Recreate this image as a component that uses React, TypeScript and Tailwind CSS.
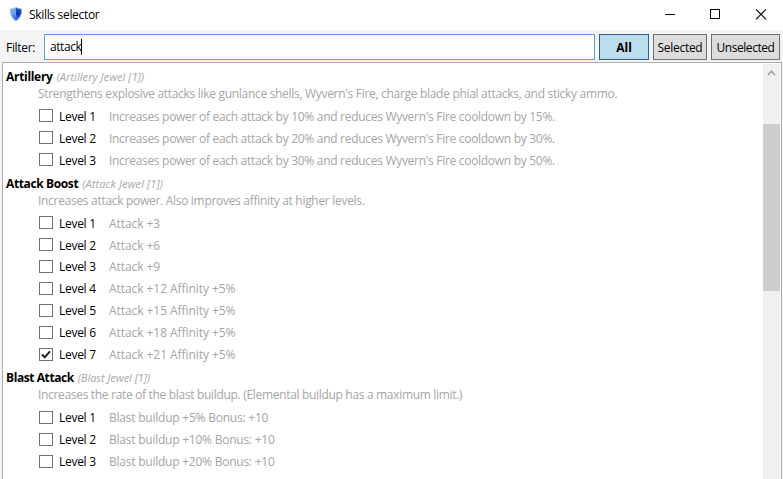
type Level = { text: string; track: string; line: string; checked?: boolean };
type Skill = {
  name: string;
  nameTrack: string;
  jewel: string;
  jewelTrack: string;
  description: string;
  descTrack: string;
  header: string;
  levels: Level[];
};

const skills: Skill[] = [
  {
    name: 'Artillery',
    nameTrack: 'tracking-[-0.3px]',
    jewel: '(Artillery Jewel [1])',
    jewelTrack: 'tracking-[0.06px]',
    description:
      "Strengthens explosive attacks like gunlance shells, Wyvern's Fire, charge blade phial attacks, and sticky ammo.",
    descTrack: 'tracking-[-0.305px]',
    header: 'pt-[4px] pb-[1px]',
    levels: [
      { text: "Increases power of each attack by 10% and reduces Wyvern's Fire cooldown by 15%.", track: 'tracking-[-0.295px]', line: 'leading-[24px]' },
      { text: "Increases power of each attack by 20% and reduces Wyvern's Fire cooldown by 30%.", track: 'tracking-[-0.295px]', line: 'leading-[24px]' },
      { text: "Increases power of each attack by 30% and reduces Wyvern's Fire cooldown by 50%.", track: 'tracking-[-0.295px]', line: 'leading-[24px]' },
    ],
  },
  {
    name: 'Attack Boost',
    nameTrack: 'tracking-[-0.38px]',
    jewel: '(Attack Jewel [1])',
    jewelTrack: 'tracking-[0.1px]',
    description: 'Increases attack power. Also improves affinity at higher levels.',
    descTrack: 'tracking-[-0.3px]',
    header: 'pt-[4px] pb-[1px]',
    levels: [
      { text: 'Attack +3', track: 'tracking-[-0.06px]', line: 'leading-[24px]' },
      { text: 'Attack +6', track: 'tracking-[-0.06px]', line: 'leading-[24px]' },
      { text: 'Attack +9', track: 'tracking-[-0.06px]', line: 'leading-[22px]' },
      { text: 'Attack +12 Affinity +5%', track: 'tracking-[-0.06px]', line: 'leading-[22px]' },
      { text: 'Attack +15 Affinity +5%', track: 'tracking-[-0.06px]', line: 'leading-[22px]' },
      { text: 'Attack +18 Affinity +5%', track: 'tracking-[-0.06px]', line: 'leading-[22px]' },
      { text: 'Attack +21 Affinity +5%', track: 'tracking-[-0.06px]', line: 'leading-[22px]', checked: true },
    ],
  },
  {
    name: 'Blast Attack',
    nameTrack: 'tracking-[-0.42px]',
    jewel: '(Blast Jewel [1])',
    jewelTrack: 'tracking-[-0.04px]',
    description: 'Increases the rate of the blast buildup. (Elemental buildup has a maximum limit.)',
    descTrack: 'tracking-[-0.32px]',
    header: 'pt-[3px] pb-[2px]',
    levels: [
      { text: 'Blast buildup +5% Bonus: +10', track: 'tracking-[-0.225px]', line: 'leading-[22px]' },
      { text: 'Blast buildup +10% Bonus: +10', track: 'tracking-[-0.235px]', line: 'leading-[22px]' },
      { text: 'Blast buildup +20% Bonus: +10', track: 'tracking-[-0.235px]', line: 'leading-[22px]' },
    ],
  },
];

function Shield() {
  return (
    <svg width="14" height="16" viewBox="0 0 14 16" className="mb-[2px] ml-[9px]">
      <defs>
        <linearGradient id="shieldLeft" x1="0" y1="0" x2="0" y2="1">
          <stop offset="0" stopColor="#7fa9e4" />
          <stop offset="0.45" stopColor="#6aa0f0" />
          <stop offset="1" stopColor="#1f5fe0" />
        </linearGradient>
        <linearGradient id="shieldRight" x1="0" y1="0" x2="0" y2="1">
          <stop offset="0" stopColor="#2b5fc4" />
          <stop offset="0.45" stopColor="#0a36b8" />
          <stop offset="1" stopColor="#3f86f0" />
        </linearGradient>
      </defs>
      <path d="M7 1.300 Q9.500 2.900 12.700 3 Q13.200 11 7 15 Q0.800 11 1.300 3 Q4.500 2.900 7 1.300Z" fill="url(#shieldLeft)" />
      <path d="M7 1.300 Q9.500 2.900 12.700 3 Q13.200 11 7 15Z" fill="url(#shieldRight)" />
      <path d="M7 1.300 Q9.500 2.900 12.700 3 Q13.200 11 7 15 Q0.800 11 1.300 3 Q4.500 2.900 7 1.300Z" fill="none" stroke="#b4c4dc" strokeWidth="0.800" />
    </svg>
  );
}

function Checkbox({ checked }: { checked?: boolean }) {
  return (
    <span className="mt-1 h-[13px] w-[14px] shrink-0 border border-[#707070] bg-white">
      {checked && (
        <svg width="12" height="11" viewBox="0 0 12 11" className="block">
          <path d="M2 5.500 L4.700 8.300 L10 2.300" fill="none" stroke="#212121" strokeWidth="2" />
        </svg>
      )}
    </span>
  );
}

function SkillSection({ skill }: { skill: Skill }) {
  return (
    <section>
      <div className={skill.header}>
        <div className="flex h-[18px] items-baseline gap-1 pl-[3px] leading-[18px]">
          <h2 className={`font-bold ${skill.nameTrack}`}>{skill.name}</h2>
          <em className={`text-[11px] text-[#a9a9a9] ${skill.jewelTrack}`}>{skill.jewel}</em>
        </div>
        <p className={`h-[18px] pt-px pl-[35px] leading-[14px] text-[#a5a5a5] ${skill.descTrack}`}>{skill.description}</p>
      </div>
      {skill.levels.map((level, i) => (
        <label key={i} className={`flex h-[22px] items-start pl-[36px] ${level.line}`}>
          <Checkbox checked={level.checked} />
          <span className="ml-[6px] w-[50px] tracking-[-0.28px]">Level {i + 1}</span>
          <span className={`text-[#a5a5a5] ${level.track}`}>{level.text}</span>
        </label>
      ))}
    </section>
  );
}

export default function App() {
  return (
    <div className="flex h-[479px] w-[783px] flex-col overflow-hidden bg-[#f4f4f4] font-['Open_Sans','Noto_Sans',sans-serif] text-[12px] whitespace-nowrap text-black">
      <header className="flex h-[30px] shrink-0 items-center bg-white">
        <Shield />
        <h1 className="ml-[6px] grow leading-[28px] tracking-[-0.32px]">Skills selector</h1>
        <svg width="118" height="30" viewBox="0 0 118 30" fill="none" stroke="#000" shapeRendering="crispEdges">
          <path d="M0 14.500 H10" />
          <path d="M45.500 9.500 H54.500 V18.500 H45.500Z" />
          <path d="M91 9.300 L101 19.300 M101 9.300 L91 19.300" shapeRendering="auto" strokeWidth="1.150" />
        </svg>
      </header>
      <div className="flex h-[32px] shrink-0 items-start gap-1 pt-[4px] pr-[3px]">
        <span className="w-[40px] pl-[6px] leading-[27px] tracking-[-0.3px]">Filter:</span>
        <div className="flex h-[26px] w-[551px] items-center border border-[#569de5] bg-white pl-[5px]">
          <span className="leading-[24px] tracking-[-0.43px]">attack</span>
          <span className="h-[16px] w-px bg-black" />
        </div>
        <button className="h-[26px] w-[50px] border border-[#2c628b] bg-[#bcddee] pt-px font-bold">All</button>
        <button className="h-[26px] w-[54px] border border-[#707070] bg-[#dddddd] pt-px tracking-[-0.3px]">Selected</button>
        <button className="h-[26px] w-[69px] border border-[#707070] bg-[#dddddd] pt-px tracking-[-0.45px]">Unselected</button>
      </div>
      <main className="mr-px ml-[2px] flex min-h-0 grow border border-b-0 border-[#abadb3] bg-white pt-px pr-px">
        <div className="min-w-0 grow overflow-hidden">
          {skills.map((skill) => (
            <SkillSection key={skill.name} skill={skill} />
          ))}
        </div>
        <div className="w-[17px] shrink-0 bg-[#f0f0f0]">
          <div className="h-[60px]">
            <svg width="17" height="17" viewBox="0 0 17 17" className="block">
              <path d="M5 11 L8.500 7.200 L12 11" fill="none" stroke="#a0a0a0" strokeWidth="1.600" />
            </svg>
          </div>
          <div className="h-[167px] bg-[#cdcdcd]" />
        </div>
      </main>
    </div>
  );
}
